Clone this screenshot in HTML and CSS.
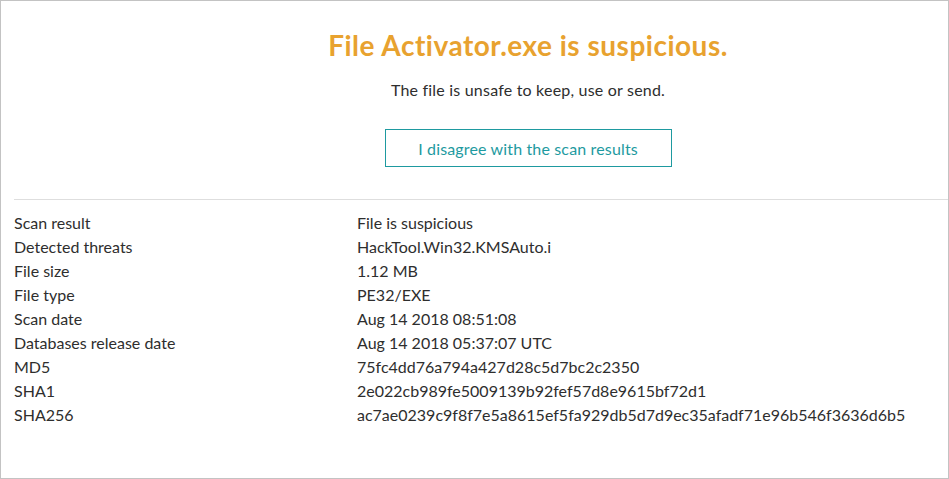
FILE: index.html
```html
<!DOCTYPE html>
<html>
<head>
<meta charset="utf-8">
<link rel="stylesheet" href="styles.css">
</head>
<body>
<div class="frame">
  <section class="verdict">
    <h1 class="title">File Activator.exe is suspicious.</h1>
    <p class="subtitle">The file is unsafe to keep, use or send.</p>
    <button class="disagree">I disagree with the scan results</button>
  </section>
  <div class="divider"></div>
  <dl class="details">
    <div class="row"><dt>Scan result</dt><dd>File is suspicious</dd></div>
    <div class="row"><dt>Detected threats</dt><dd>HackTool.Win32.KMSAuto.i</dd></div>
    <div class="row"><dt>File size</dt><dd>1.12 MB</dd></div>
    <div class="row"><dt>File type</dt><dd>PE32/EXE</dd></div>
    <div class="row"><dt>Scan date</dt><dd>Aug 14 2018 08:51:08</dd></div>
    <div class="row"><dt>Databases release date</dt><dd>Aug 14 2018 05:37:07 UTC</dd></div>
    <div class="row"><dt>MD5</dt><dd>75fc4dd76a794a427d28c5d7bc2c2350</dd></div>
    <div class="row"><dt>SHA1</dt><dd>2e022cb989fe5009139b92fef57d8e9615bf72d1</dd></div>
    <div class="row"><dt>SHA256</dt><dd>ac7ae0239c9f8f7e5a8615ef5fa929db5d7d9ec35afadf71e96b546f3636d6b5</dd></div>
  </dl>
</div>
</body>
</html>
```

FILE: styles.css
```css
html, body {
  margin: 0;
  padding: 0;
  background: #ffffff;
}
body {
  font-family: Lato, "Open Sans", sans-serif;
  color: #2e2e2e;
}
.frame {
  box-sizing: border-box;
  width: 949px;
  height: 479px;
  border: 1px solid #c3c3c3;
  display: flex;
  flex-direction: column;
}
.verdict {
  display: flex;
  flex-direction: column;
  align-items: center;
  padding-left: 107px;
  padding-top: 25px;
}
.title {
  margin: 0;
  font-size: 28px;
  font-weight: 700;
  letter-spacing: 0.5px;
  line-height: 38px;
  color: #e8a22f;
}
.subtitle {
  margin: 14px 0 0;
  font-size: 16px;
  letter-spacing: 0.2px;
  line-height: 24px;
}
.disagree {
  margin-top: 27px;
  width: 287px;
  height: 38px;
  background: #fff;
  border: 1px solid #1e9aa0;
  color: #1e9aa0;
  font-family: inherit;
  font-size: 16px;
  letter-spacing: 0.15px;
  padding: 0;
}
.divider {
  margin: 32px 0 0 13px;
  height: 1px;
  background: #dedede;
}
.details {
  margin: 11px 0 0 13px;
  font-size: 16px;
  line-height: 24px;
}
.row {
  display: grid;
  grid-template-columns: 343px 1fr;
}
.details dt, .details dd {
  margin: 0;
}
```
